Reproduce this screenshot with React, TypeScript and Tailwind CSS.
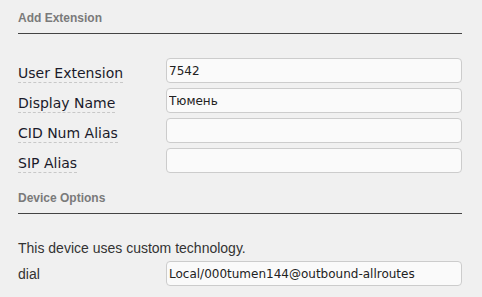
import React from "react";

const dejavu = { fontFamily: '"DejaVu Sans", Verdana, sans-serif' };

function Header({ children }: { children: React.ReactNode }) {
  return (
    <div className="border-b border-[#444] pb-[8px] text-[12px] font-bold leading-[14px] text-[#7a7a7a] [font-family:'Liberation_Sans',Arial,sans-serif]">
      {children}
    </div>
  );
}

function Row({ label, value }: { label: string; value?: string }) {
  return (
    <div className="flex h-[25px] items-start">
      <div className="w-[148px] shrink-0 pt-[2px]">
        <span className="inline-block border-b border-dashed border-[#c8c8c8] text-[14px] leading-[18px] text-[#1a1a2a] [font-family:'DejaVu_Sans',Verdana,sans-serif]">
          {label}
        </span>
      </div>
      <input
        readOnly
        value={value ?? ""}
        className="h-[25px] flex-1 rounded-[4px] border border-[#cccccc] bg-[#fafafa] px-[2px] text-[12px] text-[#222] outline-none [font-family:'DejaVu_Sans',Verdana,sans-serif]"
      />
    </div>
  );
}

export default function App() {
  return (
    <div className="min-h-screen bg-[#f0f0f0] pl-[18px] pr-[20px] pt-[11px]">
      <Header>Add Extension</Header>
      <div className="mt-[24px] flex flex-col gap-[5px]">
        <Row label="User Extension" value="7542" />
        <Row label="Display Name" value="Тюмень" />
        <Row label="CID Num Alias" />
        <Row label="SIP Alias" />
      </div>
      <div className="mt-[18px]">
        <Header>Device Options</Header>
      </div>
      <div className="mt-[26px] text-[14px] leading-[16px] text-[#333] [font-family:'Liberation_Sans',Arial,sans-serif]">
        This device uses custom technology.
      </div>
      <div className="mt-[5px] flex h-[25px] items-start">
        <div className="w-[148px] shrink-0 pt-[5px] text-[14px] leading-[16px] text-[#333] [font-family:'Liberation_Sans',Arial,sans-serif]">
          dial
        </div>
        <input
          readOnly
          value="Local/000tumen144@outbound-allroutes"
          style={dejavu}
          className="h-[25px] flex-1 rounded-[4px] border border-[#cccccc] bg-[#fafafa] px-[2px] text-[12px] text-[#222] outline-none"
        />
      </div>
    </div>
  );
}
